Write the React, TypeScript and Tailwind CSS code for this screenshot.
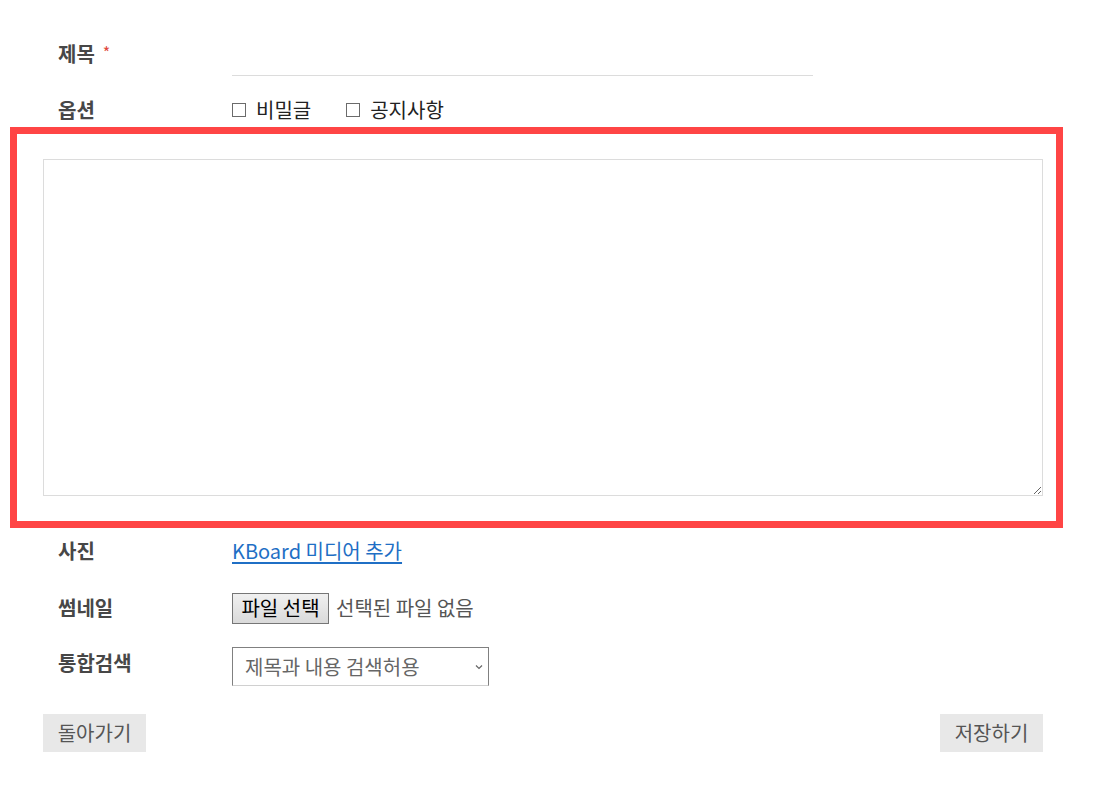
import React from "react";

const font = { fontFamily: '"Noto Sans CJK KR", "Noto Sans", sans-serif' };

function Label({ children, className = "" }: { children: React.ReactNode; className?: string }) {
  return (
    <div className={"w-[189px] shrink-0 pl-[15px] text-[20px] font-bold leading-[28px] text-[#474747] " + className}>
      {children}
    </div>
  );
}

function Check({ label }: { label: string }) {
  return (
    <label className="flex items-center">
      <span className="block h-[14px] w-[14px] border-[1.5px] border-[#6b6b6b] bg-white" />
      <span className="ml-[10px] text-[20px] leading-[28px] text-[#222]">{label}</span>
    </label>
  );
}

export default function App() {
  return (
    <div className="min-h-[786px] w-full bg-white" style={font}>
      <div className="ml-[43px] w-[1000px] pt-[36px]">
        {/* 제목 */}
        <div className="flex h-[40px]">
          <Label className="pt-[4px]">
            제목
            <span className="relative top-[-3px] ml-[8px] text-[16px] font-normal text-[#e0483b]">*</span>
          </Label>
          <div className="h-[40px] w-[581px] border-b border-[#dcdcdc]" />
        </div>

        {/* 옵션 */}
        <div className="mt-[20px] flex h-[28px] items-center">
          <Label>옵션</Label>
          <div className="flex items-center gap-[35px]">
            <Check label="비밀글" />
            <Check label="공지사항" />
          </div>
        </div>

        {/* 본문 (highlighted) */}
        <div className="mt-[3px] ml-[-33px] mr-[-20px] border-[7px] border-[#ff4545] pt-[25px] pb-[25px] pl-[26px] pr-[13px]">
          <textarea className="block h-[337px] w-[1000px] border border-[#dcdcdc] bg-white outline-none" />
        </div>

        {/* 사진 */}
        <div className="mt-[9px] flex h-[28px] items-center">
          <Label>사진</Label>
          <a className="text-[20px] leading-[28px] text-[#1f6fc5] underline underline-offset-[3px]" href="#">
            KBoard 미디어 추가
          </a>
        </div>

        {/* 썸네일 */}
        <div className="mt-[28px] flex h-[30px] items-center">
          <Label>썸네일</Label>
          <div className="flex items-center">
            <span className="flex h-[31px] w-[97px] items-center justify-center border border-[#767676] bg-gradient-to-b from-[#f0f0f0] to-[#dadada] text-[20px] leading-[28px] text-black">
              파일 선택
            </span>
            <span className="ml-[7px] text-[20px] leading-[28px] text-[#555]">선택된 파일 없음</span>
          </div>
        </div>

        {/* 통합검색 */}
        <div className="mt-[24px] flex h-[39px]">
          <Label className="pt-[2px]">통합검색</Label>
          <div className="flex h-[39px] w-[257px] items-center justify-between border border-[#808080] border-b-[#d0d0d0] pl-[12px] pr-[5px]">
            <span className="text-[20px] leading-[28px] text-[#666]">제목과 내용 검색허용</span>
            <svg width="8" height="6" viewBox="0 0 8 6" className="mt-[1px]">
              <path d="M1 1.5 L4 4.5 L7 1.5" fill="none" stroke="#666" strokeWidth="1.2" />
            </svg>
          </div>
        </div>

        {/* 버튼 */}
        <div className="mt-[28px] flex justify-between">
          <button className="h-[38px] w-[103px] bg-[#e8e8e8] text-[20px] leading-[28px] text-[#555]">돌아가기</button>
          <button className="h-[38px] w-[103px] bg-[#e8e8e8] text-[20px] leading-[28px] text-[#555]">저장하기</button>
        </div>
      </div>
    </div>
  );
}
